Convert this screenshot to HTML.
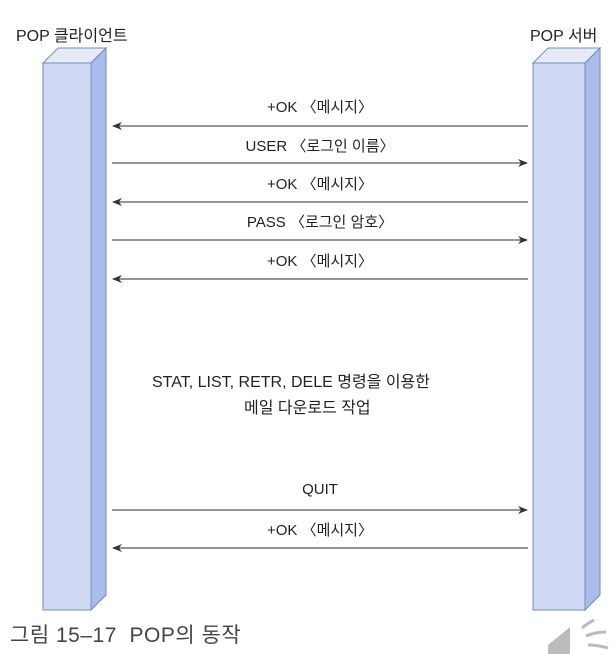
<!DOCTYPE html>
<html><head><meta charset="utf-8"><style>
body{margin:0;width:616px;height:654px;background:#fff;overflow:hidden;position:relative;font-family:"Liberation Sans","Noto Sans CJK KR",sans-serif;color:#222}
.t{position:absolute;font-size:15px;white-space:nowrap}
.c{position:absolute;left:112px;width:416px;text-align:center;font-size:15px}
</style></head><body>
<svg width="616" height="654" style="position:absolute;left:0;top:0">
<defs><marker id="a" markerWidth="10" markerHeight="8" refX="9" refY="4" orient="auto" markerUnits="userSpaceOnUse"><path d="M0,0 L10,4 L0,8 L3,4z" fill="#333"/></marker></defs>
<g stroke="#6c8ebf" stroke-width="1">
<path d="M43,63 L58,48 L106,48 L91,63z" fill="#e6eaf7"/>
<path d="M91,63 L106,48 L106,595 L91,610z" fill="#a9bdea"/>
<rect x="43" y="63" width="48" height="547" fill="#d0d9f3"/>
<path d="M533,63 L548,48 L600,48 L585,63z" fill="#e6eaf7"/>
<path d="M585,63 L600,48 L600,595 L585,610z" fill="#a9bdea"/>
<rect x="533" y="63" width="52" height="547" fill="#d0d9f3"/>
</g>
<g stroke="#555" stroke-width="1.3" marker-end="url(#a)">
<line x1="528" y1="126" x2="113" y2="126"/>
<line x1="112" y1="163" x2="527" y2="163"/>
<line x1="528" y1="202" x2="113" y2="202"/>
<line x1="112" y1="240" x2="527" y2="240"/>
<line x1="528" y1="279" x2="113" y2="279"/>
<line x1="112" y1="510" x2="527" y2="510"/>
<line x1="528" y1="548" x2="113" y2="548"/>
</g>
<path d="M548,645 L570,627 L570,654 L548,654z" fill="#bbb"/>
<path d="M582,628 q6,-5 12,-8 M586,636 q10,-4 20,-4 M588,645 q10,0 20,3" stroke="#bbb" stroke-width="3" fill="none"/>
</svg>
<div class="t" style="left:16px;top:22px;font-size:16px">POP 클라이언트</div>
<div class="t" style="left:530px;top:22px;font-size:16px">POP 서버</div>
<div class="c" style="top:96px">+OK 〈메시지〉</div>
<div class="c" style="top:135px">USER 〈로그인 이름〉</div>
<div class="c" style="top:173px">+OK 〈메시지〉</div>
<div class="c" style="top:211px">PASS 〈로그인 암호〉</div>
<div class="c" style="top:250px">+OK 〈메시지〉</div>
<div class="t" style="left:152px;top:368px;font-size:16px">STAT, LIST, RETR, DELE 명령을 이용한</div>
<div class="t" style="left:244px;top:394px;font-size:16px">메일 다운로드 작업</div>
<div class="c" style="top:481px">QUIT</div>
<div class="c" style="top:519px">+OK 〈메시지〉</div>
<div class="t" style="left:10px;top:619px;font-size:21px;color:#444;letter-spacing:0.5px">그림 15–17&nbsp; POP의 동작</div>
</body></html>
